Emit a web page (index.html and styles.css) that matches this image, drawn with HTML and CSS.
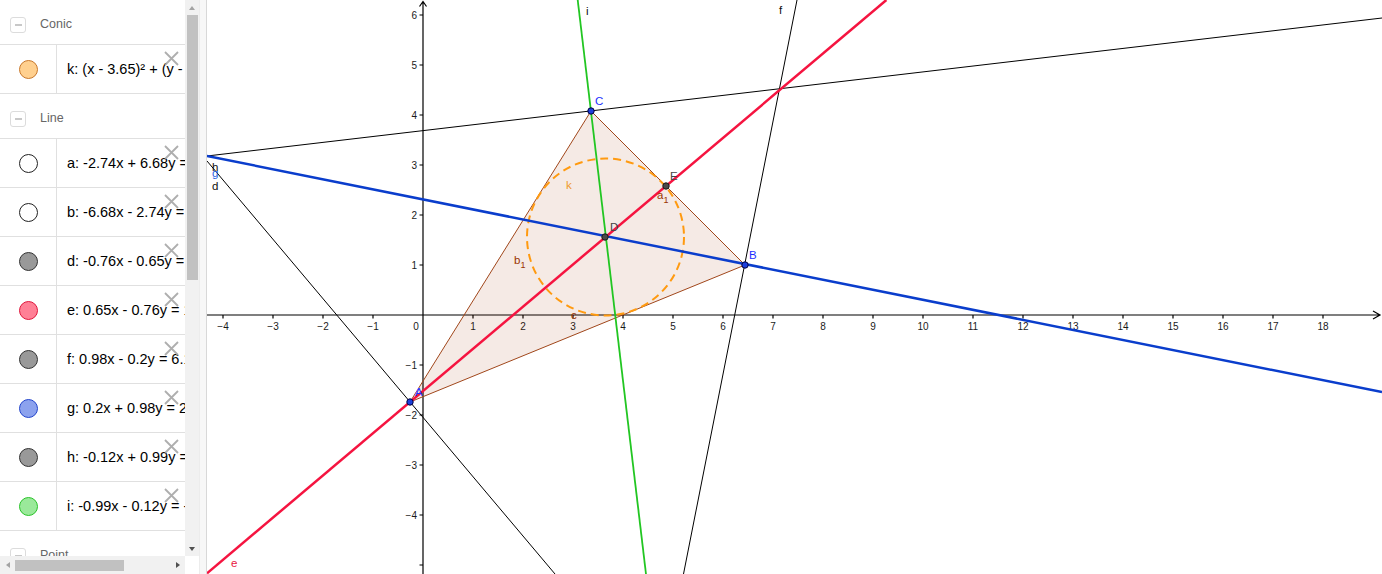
FILE: index.html
```html
<!DOCTYPE html>
<html>
<head>
<meta charset="utf-8">
<title>GeoGebra</title>
<link rel="stylesheet" href="styles.css">
</head>
<body>
<div class="app">
  <div class="algebra">
    <div class="alg-body">
      <div class="alg-list">
        <div class="group-head"><span class="toggle"></span><span class="group-name">Conic</span></div>
        <div class="item">
          <div class="marble-cell"><span class="marble m-orange"></span></div>
          <div class="formula">k: (x - 3.65)² + (y - 1.56)² = 2.46</div>
          <svg class="del" viewBox="0 0 15 15"><path d="M1 1 L14 14 M14 1 L1 14"/></svg>
        </div>
        <div class="group-head"><span class="toggle"></span><span class="group-name">Line</span></div>
        <div class="item">
          <div class="marble-cell"><span class="marble m-white"></span></div>
          <div class="formula">a: -2.74x + 6.68y = 20.7</div>
          <svg class="del" viewBox="0 0 15 15"><path d="M1 1 L14 14 M14 1 L1 14"/></svg>
        </div>
        <div class="item">
          <div class="marble-cell"><span class="marble m-white"></span></div>
          <div class="formula">b: -6.68x - 2.74y = -29.39</div>
          <svg class="del" viewBox="0 0 15 15"><path d="M1 1 L14 14 M14 1 L1 14"/></svg>
        </div>
        <div class="item">
          <div class="marble-cell"><span class="marble m-gray"></span></div>
          <div class="formula">d: -0.76x - 0.65y = 1.33</div>
          <svg class="del" viewBox="0 0 15 15"><path d="M1 1 L14 14 M14 1 L1 14"/></svg>
        </div>
        <div class="item">
          <div class="marble-cell"><span class="marble m-red"></span></div>
          <div class="formula">e: 0.65x - 0.76y = 1.16</div>
          <svg class="del" viewBox="0 0 15 15"><path d="M1 1 L14 14 M14 1 L1 14"/></svg>
        </div>
        <div class="item">
          <div class="marble-cell"><span class="marble m-gray"></span></div>
          <div class="formula">f: 0.98x - 0.2y = 6.1</div>
          <svg class="del" viewBox="0 0 15 15"><path d="M1 1 L14 14 M14 1 L1 14"/></svg>
        </div>
        <div class="item">
          <div class="marble-cell"><span class="marble m-blue"></span></div>
          <div class="formula">g: 0.2x + 0.98y = 2.27</div>
          <svg class="del" viewBox="0 0 15 15"><path d="M1 1 L14 14 M14 1 L1 14"/></svg>
        </div>
        <div class="item">
          <div class="marble-cell"><span class="marble m-gray"></span></div>
          <div class="formula">h: -0.12x + 0.99y = 3.65</div>
          <svg class="del" viewBox="0 0 15 15"><path d="M1 1 L14 14 M14 1 L1 14"/></svg>
        </div>
        <div class="item">
          <div class="marble-cell"><span class="marble m-green"></span></div>
          <div class="formula">i: -0.99x - 0.12y = -3.78</div>
          <svg class="del" viewBox="0 0 15 15"><path d="M1 1 L14 14 M14 1 L1 14"/></svg>
        </div>
        <div class="group-head"><span class="toggle"></span><span class="group-name">Point</span></div>
      </div>
      <div class="hscroll">
        <span class="harrow"><span class="tri-left"></span></span>
        <span class="hthumb"></span>
        <span class="hrest"></span>
        <span class="harrow"><span class="tri-right"></span></span>
      </div>
    </div>
    <div class="vscroll">
      <span class="varrow"><span class="tri-up"></span></span>
      <span class="vthumb"></span>
      <span class="vrest"></span>
      <span class="varrow"><span class="tri-down"></span></span>
      <span class="corner"></span>
    </div>
  </div>
  <div class="splitter"></div>
  <div class="graphics">
    <svg class="canvas" width="1175" height="574" viewBox="0 0 1175 574">
      <g class="axis">
        <path d="M0 315 H1173 M1166 311 L1173 315 L1166 319"/>
        <path d="M216 574 V1.5 M212.5 6.5 L216 1.5 L219.5 6.5"/>
        <path d="M16 315 v3.5 M66 315 v3.5 M116 315 v3.5 M166 315 v3.5 M266 315 v3.5 M316 315 v3.5 M366 315 v3.5 M416 315 v3.5 M466 315 v3.5 M516 315 v3.5 M566 315 v3.5 M616 315 v3.5 M666 315 v3.5 M716 315 v3.5 M766 315 v3.5 M816 315 v3.5 M866 315 v3.5 M916 315 v3.5 M966 315 v3.5 M1016 315 v3.5 M1066 315 v3.5 M1116 315 v3.5"/>
        <path d="M212.5 15 H216 M212.5 65 H216 M212.5 115 H216 M212.5 165 H216 M212.5 215 H216 M212.5 265 H216 M212.5 365 H216 M212.5 415 H216 M212.5 465 H216 M212.5 515 H216 M212.5 565 H216"/>
      </g>
      <g class="axis-labels xl">
        <text x="16" y="330">−4</text><text x="66" y="330">−3</text><text x="116" y="330">−2</text><text x="166" y="330">−1</text>
        <text x="266" y="330">1</text><text x="316" y="330">2</text><text x="366" y="330">3</text><text x="416" y="330">4</text>
        <text x="466" y="330">5</text><text x="516" y="330">6</text><text x="566" y="330">7</text><text x="616" y="330">8</text>
        <text x="666" y="330">9</text><text x="716" y="330">10</text><text x="766" y="330">11</text><text x="816" y="330">12</text>
        <text x="866" y="330">13</text><text x="916" y="330">14</text><text x="966" y="330">15</text><text x="1016" y="330">16</text>
        <text x="1066" y="330">17</text><text x="1116" y="330">18</text>
        <text x="209" y="330">0</text>
      </g>
      <g class="axis-labels yl">
        <text x="210" y="19">6</text><text x="210" y="69">5</text><text x="210" y="119">4</text><text x="210" y="169">3</text>
        <text x="210" y="219">2</text><text x="210" y="269">1</text><text x="210" y="369">−1</text><text x="210" y="419">−2</text>
        <text x="210" y="469">−3</text><text x="210" y="519">−4</text>
      </g>
      <polygon class="poly" points="384,111 538,265 203,402"/>
      <circle class="conic" cx="398.5" cy="237" r="78.5"/>
      <path class="ln black" d="M0 156 L1175 18"/>
      <path class="ln black" d="M590 0 L476.5 574"/>
      <path class="ln black" d="M0 161 L348 574"/>
      <path class="ln green" d="M370.7 0 L439 574"/>
      <path class="ln blue" d="M0 156 L1175 392"/>
      <path class="ln red" d="M0 573.3 L679.4 0"/>
      <circle class="pt free" cx="203" cy="402" r="3.2"/>
      <circle class="pt free" cx="538" cy="265" r="3.2"/>
      <circle class="pt free" cx="384" cy="111" r="3.2"/>
      <circle class="pt dep" cx="398" cy="237" r="3.2"/>
      <circle class="pt dep" cx="459" cy="186" r="3.2"/>
      <g class="lbl">
        <text class="lb-blue" x="388" y="105">C</text>
        <text class="lb-blue" x="542" y="259">B</text>
        <text class="lb-blue" x="208" y="396">A</text>
        <text class="lb-dark" x="403" y="231">D</text>
        <text class="lb-dark" x="463" y="180">E</text>
        <text class="lb-brown" x="450" y="199">a<tspan class="sub" dy="4">1</tspan></text>
        <text class="lb-brown" x="307" y="264">b<tspan class="sub" dy="4">1</tspan></text>
        <text class="lb-brown" x="364" y="319">c</text>
        <text class="lb-orange" x="359" y="189">k</text>
        <text class="lb-black" x="379" y="15">i</text>
        <text class="lb-black" x="572" y="14">f</text>
        <text class="lb-red" x="24" y="567">e</text>
        <text class="lb-black" x="5" y="171">h</text>
        <text class="lb-blue2" x="5" y="177">g</text>
        <text class="lb-black" x="5" y="190">d</text>
      </g>
    </svg>
  </div>
</div>
</body>
</html>
```

FILE: styles.css
```css
* { box-sizing: border-box; }
html, body { margin: 0; padding: 0; background: #fff; }
body {
  font-family: "Liberation Sans", Arial, sans-serif;
  overflow: hidden;
}
.app {
  display: flex;
  width: 1382px;
  height: 574px;
}
.algebra {
  flex: none;
  width: 199px;
  height: 574px;
  display: flex;
}
.alg-body {
  width: 185px;
  display: flex;
  flex-direction: column;
}
.alg-list {
  height: 556px;
  overflow: hidden;
}
.group-head {
  height: 45px;
  border-bottom: 1px solid #e0e0e0;
  display: flex;
  align-items: flex-start;
  padding-left: 10px;
  gap: 14px;
}
.toggle {
  margin-top: 17px;
  width: 16px;
  height: 16px;
  border: 1px solid #dcdcdc;
  border-radius: 3px;
  display: flex;
  align-items: center;
  justify-content: center;
}
.toggle::before {
  content: "";
  width: 7px;
  height: 2px;
  background: #c8c8c8;
}
.group-name {
  margin-top: 17px;
  font-size: 12.5px;
  line-height: 14px;
  color: #666;
}
.item {
  position: relative;
  height: 49px;
  border-bottom: 1px solid #e0e0e0;
  display: flex;
}
.marble-cell {
  flex: none;
  width: 57px;
  border-right: 1px solid #e0e0e0;
  display: flex;
  align-items: center;
  justify-content: center;
}
.marble {
  width: 19px;
  height: 19px;
  border-radius: 50%;
  border: 1px solid #333;
}
.m-orange { background: #ffd08f; border-color: #c9782a; }
.m-white { background: #fff; border-color: #222; }
.m-gray { background: #999; border-color: #333; }
.m-red { background: #ff8096; border-color: #e0163c; }
.m-blue { background: #8ca2ee; border-color: #2244cc; }
.m-green { background: #9ae99a; border-color: #2ac42a; }
.formula {
  flex: 1;
  min-width: 0;
  padding-left: 10px;
  padding-bottom: 1px;
  display: flex;
  align-items: center;
  white-space: nowrap;
  overflow: hidden;
  font-size: 14.5px;
  color: #000;
}
.del {
  position: absolute;
  left: 164px;
  top: 6px;
  width: 15px;
  height: 15px;
  fill: none;
  stroke: rgba(160, 160, 160, 0.85);
  stroke-width: 1.8;
}
.hscroll {
  height: 18px;
  background: #f1f1f1;
  display: flex;
  align-items: center;
}
.harrow {
  flex: none;
  width: 15px;
  height: 18px;
  display: flex;
  align-items: center;
  justify-content: center;
}
.tri-left {
  width: 0; height: 0;
  border-top: 3.5px solid transparent;
  border-bottom: 3.5px solid transparent;
  border-right: 4px solid #a3a3a3;
}
.tri-right {
  width: 0; height: 0;
  border-top: 3.5px solid transparent;
  border-bottom: 3.5px solid transparent;
  border-left: 4px solid #505050;
}
.hthumb {
  flex: none;
  width: 109px;
  height: 11px;
  background: #c1c1c1;
}
.hrest { flex: 1; }
.vscroll {
  width: 14px;
  height: 574px;
  display: flex;
  flex-direction: column;
  background: #f1f1f1;
}
.varrow {
  flex: none;
  height: 15px;
  display: flex;
  align-items: center;
  justify-content: center;
}
.tri-up {
  width: 0; height: 0;
  border-left: 3.5px solid transparent;
  border-right: 3.5px solid transparent;
  border-bottom: 4px solid #a3a3a3;
}
.tri-down {
  width: 0; height: 0;
  border-left: 3.5px solid transparent;
  border-right: 3.5px solid transparent;
  border-top: 4px solid #505050;
}
.vthumb {
  flex: none;
  height: 265px;
  margin: 0 1px 0 2px;
  background: #c1c1c1;
}
.vrest { flex: 1; }
.corner {
  flex: none;
  height: 18px;
  background: #fff;
}
.splitter {
  flex: none;
  width: 8px;
  background: #f7f7f7;
  border-left: 1px solid #ececec;
  border-right: 1px solid #d8d8d8;
}
.graphics {
  flex: 1;
  height: 574px;
  overflow: hidden;
}
.canvas {
  display: block;
  font-family: "Liberation Sans", Arial, sans-serif;
}
.axis path {
  fill: none;
  stroke: #000;
  stroke-width: 1.2;
}
.axis-labels text {
  font-size: 10px;
  fill: #1a1a1a;
}
.xl text { text-anchor: middle; }
.yl text { text-anchor: end; }
.poly {
  fill: rgba(153, 51, 0, 0.1);
  stroke: #a0461a;
  stroke-width: 1;
}
.conic {
  fill: none;
  stroke: #ff9a10;
  stroke-width: 2;
  stroke-dasharray: 8 5;
}
.ln { fill: none; }
.ln.black { stroke: #000; stroke-width: 1; }
.ln.green { stroke: #22c622; stroke-width: 1.8; }
.ln.blue { stroke: #0a3dcc; stroke-width: 2.5; }
.ln.red { stroke: #f51440; stroke-width: 2.5; }
.pt { stroke-width: 1; }
.pt.free { fill: #1d3fdb; stroke: #000040; }
.pt.dep { fill: #4a4a4a; stroke: #1a1a1a; }
.lbl text { font-size: 11.5px; }
.lbl .sub { font-size: 9px; }
.lb-blue { fill: #1a2fff; }
.lb-blue2 { fill: #2a5fe0; }
.lb-dark { fill: #444; }
.lb-brown { fill: #993300; }
.lb-orange { fill: #ef9a2a; }
.lb-black { fill: #111; }
.lb-red { fill: #e8173f; }
```
